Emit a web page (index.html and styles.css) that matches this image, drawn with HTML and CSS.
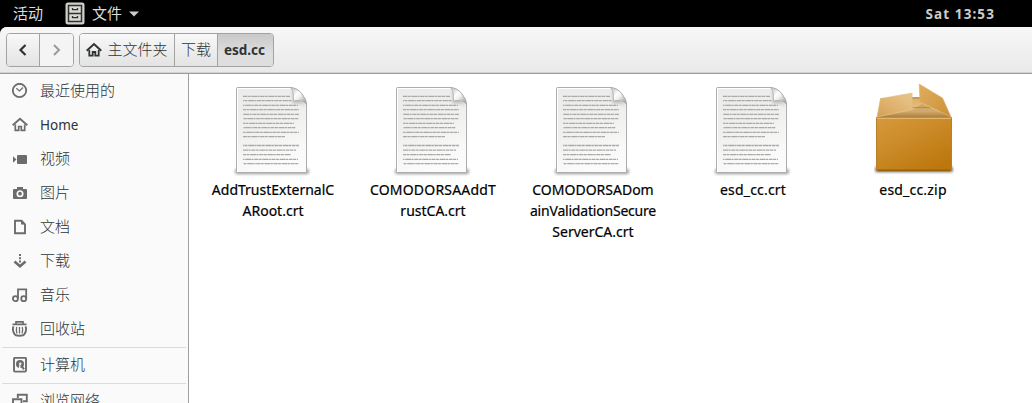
FILE: index.html
```html
<!DOCTYPE html>
<html lang="zh-CN">
<head>
<meta charset="utf-8">
<title>esd.cc</title>
<link rel="stylesheet" href="styles.css">
</head>
<body>
<svg class="defs" aria-hidden="true">
  <defs>
    <linearGradient id="paper" x1="0" y1="0" x2="0.3" y2="1">
      <stop offset="0" stop-color="#ebebe9"/><stop offset="0.5" stop-color="#efefee"/><stop offset="1" stop-color="#fbfbfb"/>
    </linearGradient>
    <linearGradient id="curl" x1="0" y1="0.3" x2="0.7" y2="1">
      <stop offset="0" stop-color="#d2d2d2"/><stop offset="0.35" stop-color="#ffffff"/><stop offset="0.6" stop-color="#eeeeee"/><stop offset="1" stop-color="#b0b0b0"/>
    </linearGradient>
    <linearGradient id="boxFront" x1="0" y1="0" x2="0.7" y2="1">
      <stop offset="0" stop-color="#d69a3c"/><stop offset="0.5" stop-color="#cb8a27"/><stop offset="1" stop-color="#bd780d"/>
    </linearGradient>
    <linearGradient id="flapLeft" x1="0" y1="1" x2="1" y2="0">
      <stop offset="0" stop-color="#d3a054"/><stop offset="0.6" stop-color="#e2b878"/><stop offset="1" stop-color="#e9c58b"/>
    </linearGradient>
    <linearGradient id="flapRight" x1="0" y1="0" x2="1" y2="1">
      <stop offset="0" stop-color="#dfae60"/><stop offset="1" stop-color="#cc9036"/>
    </linearGradient>
    <linearGradient id="boxInside" x1="0" y1="0" x2="0" y2="1">
      <stop offset="0" stop-color="#dcb06a"/><stop offset="0.7" stop-color="#e6c187"/><stop offset="1" stop-color="#b98b48"/>
    </linearGradient>
    <filter id="soft" x="-20%" y="-100%" width="140%" height="300%"><feGaussianBlur stdDeviation="1.5"/></filter>
    <symbol id="textfile" viewBox="0 0 80 96">
      <rect x="3" y="87" width="74" height="5" rx="2" fill="#000" opacity=".4" filter="url(#soft)"/>
      <path d="M4.500 6.500 Q4.500 5.500 5.500 5.500 H59 Q66 6.500 70 12 Q74.500 18 74.500 22 V89.500 Q74.500 90.500 73.500 90.500 H5.500 Q4.500 90.500 4.500 89.500Z" fill="url(#paper)" stroke="#adadad" stroke-width="1"/>
      <path d="M5.500 89.500 V6.500H58" fill="none" stroke="#fff" stroke-width="1"/>
      <g fill="none" stroke="#a9a9a7" stroke-width="1.300" stroke-dasharray="4 .5 3 .7 6 .4 2 .6">
        <path d="M11 14.300H58"/><path d="M11 18.700H60" stroke-dashoffset="3"/><path d="M11 23.300H66" stroke-dashoffset="6"/>
        <path d="M11 27.700H67" stroke-dashoffset="1"/><path d="M11 32.300H67" stroke-dashoffset="8"/><path d="M11 36.700H67" stroke-dashoffset="4"/>
        <path d="M11 41.300H62" stroke-dashoffset="2"/><path d="M11 45.700H64" stroke-dashoffset="7"/><path d="M11 50.300H67" stroke-dashoffset="5"/>
        <path d="M11 54.700H53"/><path d="M11 63.500H67" stroke-dashoffset="3"/><path d="M11 68.200H64" stroke-dashoffset="9"/>
        <path d="M11 72.700H59" stroke-dashoffset="1"/><path d="M11 77.300H66" stroke-dashoffset="6"/><path d="M11 81.700H67" stroke-dashoffset="4"/>
      </g>
      <path d="M59 8 Q62 13 60.500 21.500 Q67 19.500 74 24Z" fill="#000" opacity=".22" filter="url(#soft)"/>
      <path d="M58.500 5.500 Q62 9 61.500 19 Q69 17 74.500 22 Q74.500 18 70 12 Q66 6.500 58.500 5.500Z" fill="url(#curl)" stroke="#a8a8a8" stroke-width=".7"/>
    </symbol>
  </defs>
</svg>

<header class="topbar">
  <span class="activities">活动</span>
  <div class="appmenu">
    <svg class="cabinet" viewBox="0 0 20 23"><rect x=".5" y=".5" width="19" height="22" rx="2.500" fill="#d0d1cc"/><path d="M3.500 3.500h13v8h-13zM3.500 11.500h13v8h-13z" fill="#d8d9d4" stroke="#30302e" stroke-width="1.500"/><path d="M7.500 6v1.700h5V6M7.500 14v1.700h5V14" fill="none" stroke="#30302e" stroke-width="1.300"/></svg>
    <span>文件</span>
    <svg class="caret" viewBox="0 0 10 6"><path d="M0 .5h10L5 5.500z" fill="#ccc"/></svg>
  </div>
  <time class="clock">Sat 13:53</time>
</header>

<div class="window">
  <div class="toolbar">
    <div class="group nav">
      <button class="btn"><svg width="10" height="14" viewBox="0 0 10 14"><path d="M7.500 2 2.500 7l5 5" fill="none" stroke="#2e3436" stroke-width="2.200"/></svg></button>
      <button class="btn off"><svg width="10" height="14" viewBox="0 0 10 14"><path d="M2 2l5 5-5 5" fill="none" stroke="#999b9b" stroke-width="2"/></svg></button>
    </div>
    <div class="group path">
      <button class="btn home"><svg width="16" height="16" viewBox="0 0 16 16"><path d="M.7 8.700 8 2l7.300 6.700" fill="none" stroke="#2e3436" stroke-width="2"/><path d="M3.300 8v5.700h3.400V10h2.600v3.700h3.400V8" fill="none" stroke="#2e3436" stroke-width="1.800"/></svg><span>主文件夹</span></button>
      <button class="btn dl">下载</button>
      <button class="btn current">esd.cc</button>
    </div>
  </div>

  <div class="body">
    <nav class="sidebar">
      <a class="place"><svg viewBox="0 0 16 16"><circle cx="7.500" cy="7.500" r="6.700" fill="none" stroke="#6b6d6c" stroke-width="1.800"/><path d="M4.300 5.200 7.500 8 11 4.500" fill="none" stroke="#6b6d6c" stroke-width="1.200"/></svg><span>最近使用的</span></a>
      <a class="place latin"><svg viewBox="0 0 16 16"><path d="M.7 8.300 8 1.800l7.300 6.500" fill="none" stroke="#6b6d6c" stroke-width="1.900"/><path d="M3.300 7.500v5.800h3.400V9.500h2.600v3.800h3.400V7.500" fill="none" stroke="#6b6d6c" stroke-width="1.700"/></svg><span>Home</span></a>
      <a class="place"><svg viewBox="0 0 16 16"><rect x="5" y="4" width="10" height="9" rx="1" fill="#6b6d6c"/><path d="M1 5.200v6.600l3.500-3.300z" fill="#6b6d6c"/></svg><span>视频</span></a>
      <a class="place"><svg viewBox="0 0 16 16"><path d="M5 2h6v2h3q1 0 1 1v8q0 1-1 1H2q-1 0-1-1V5q0-1 1-1h3z" fill="#6b6d6c"/><circle cx="8" cy="8.700" r="2.700" fill="#6b6d6c" stroke="#fafafa" stroke-width="1.700"/></svg><span>图片</span></a>
      <a class="place"><svg viewBox="0 0 16 16"><path d="M3 1.800h6.500L13 5.300v9H3z" fill="none" stroke="#6b6d6c" stroke-width="1.900"/><path d="M9 1.500v4h4z" fill="#6b6d6c"/></svg><span>文档</span></a>
      <a class="place"><svg viewBox="0 0 16 16"><path d="M8 1v9" fill="none" stroke="#6b6d6c" stroke-width="2" stroke-dasharray="2 1.200"/><path d="M2.500 8.500 8 13.300l5.500-4.800" fill="none" stroke="#6b6d6c" stroke-width="2.500"/></svg><span>下载</span></a>
      <a class="place"><svg viewBox="0 0 16 16"><path d="M6 11.500V2.300h8.200v9.200" fill="none" stroke="#6b6d6c" stroke-width="1.800"/><circle cx="3.400" cy="11.700" r="2.500" fill="none" stroke="#6b6d6c" stroke-width="1.800"/><circle cx="11.700" cy="11.700" r="2.500" fill="none" stroke="#6b6d6c" stroke-width="1.800"/></svg><span>音乐</span></a>
      <a class="place"><svg viewBox="0 0 16 16"><path d="M.5 3.300h14M4 3V.8h7V3" fill="none" stroke="#6b6d6c" stroke-width="1.700"/><path d="M1.500 5.300q-1.500 3.500.8 7.500 1 2 5.200 2t5.200-2q2.300-4 .8-7.500" fill="none" stroke="#6b6d6c" stroke-width="1.900"/><path d="M4.700 6q-.8 3 .2 6.500M7.500 6v6.500M10.300 6q.8 3-.2 6.500" fill="none" stroke="#6b6d6c" stroke-width="1.300"/></svg><span>回收站</span></a>
      <a class="place sep"><svg viewBox="0 0 16 16"><rect x="2" y=".8" width="12" height="13.800" rx="1" fill="none" stroke="#6b6d6c" stroke-width="1.900"/><circle cx="8" cy="7" r="4" fill="#6b6d6c"/><circle cx="8.300" cy="6.700" r="1.200" fill="#fafafa"/><path d="M8 7.800 7.500 12" stroke="#fafafa" stroke-width="1.500"/><path d="M9 8.200 12 12.300" stroke="#6b6d6c" stroke-width="2"/></svg><span>计算机</span></a>
      <a class="place sep"><svg viewBox="0 0 16 16"><path d="M5.800 5V1.800h9v6.500H11" fill="none" stroke="#6b6d6c" stroke-width="1.900"/><path d="M1 6.200h8.500v6.500H1z" fill="none" stroke="#6b6d6c" stroke-width="1.900"/></svg><span>浏览网络</span></a>
    </nav>

    <main class="files">
      <figure class="file"><svg class="icon"><use href="#textfile"/></svg><figcaption><span>AddTrustExternalC</span><span>ARoot.crt</span></figcaption></figure>
      <figure class="file"><svg class="icon"><use href="#textfile"/></svg><figcaption><span class="wide">COMODORSAAddT</span><span>rustCA.crt</span></figcaption></figure>
      <figure class="file"><svg class="icon"><use href="#textfile"/></svg><figcaption><span>COMODORSADom</span><span class="tight">ainValidationSecure</span><span>ServerCA.crt</span></figcaption></figure>
      <figure class="file"><svg class="icon"><use href="#textfile"/></svg><figcaption><span class="wide">esd_cc.crt</span></figcaption></figure>
      <figure class="file">
        <svg class="icon zip" viewBox="0 0 80 96">
          <rect x="1" y="85" width="78" height="5" rx="2" fill="#000" opacity=".6" filter="url(#soft)"/>
          <path d="M6.500 16 H68.500 L77 35 H3Z" fill="url(#boxInside)"/>
          <path d="M38 15H46V17H38Z" fill="#c99a50"/>
          <path d="M38 25.500H56" stroke="#c28f43" stroke-width=".8"/>
          <path d="M38 28 5 35H76L48 22Z" fill="#8a5a18" opacity=".22"/>
          <path d="M2.500 35.500H77.500V87Q77.500 89 75.500 89H4.500Q2.500 89 2.500 87Z" fill="url(#boxFront)" stroke="#b9802c"/>
          <path d="M3 36.300H77" stroke="#e3b56c" stroke-width="1.200"/>
          <path d="M3.500 88.300H76.500" stroke="#96600d" stroke-width="1.500"/>
          <path d="M6.500 16.500 38.200 11 37.700 27.500 3 35Z" fill="url(#flapLeft)" stroke="#e3c28b" stroke-width=".6"/>
          <path d="M45.200 2 68.500 16 77 35 46 19.500Z" fill="url(#flapRight)" stroke="#dcae65" stroke-width=".6"/>
        </svg>
        <figcaption><span class="wide">esd_cc.zip</span></figcaption>
      </figure>
    </main>
  </div>
</div>
</body>
</html>
```
FILE: styles.css
```css
* { box-sizing: border-box; }
body {
  margin: 0;
  width: 1032px;
  height: 403px;
  overflow: hidden;
  background: #000;
  font-family: "Noto Sans", "Noto Sans CJK SC", sans-serif;
  font-size: 15px;
  color: #2e3436;
  display: flex;
  flex-direction: column;
}
.defs { width: 0; height: 0; flex: none; display: block; }
svg { flex: none; display: block; }

.topbar {
  height: 27px;
  flex: none;
  display: flex;
  align-items: center;
  padding: 0 37px 0 13px;
  color: #dcdcdc;
  line-height: 26px;
}
.topbar span { font-family: "Noto Sans CJK SC", sans-serif; padding-bottom: 2px; }
.activities { width: 52px; }
.appmenu { display: flex; align-items: center; }
.appmenu span { width: 31px; }
.cabinet { width: 20px; height: 23px; margin-right: 7px; }
.caret { width: 10px; height: 6px; margin-left: 6px; }
.clock { margin-left: auto; font-size: 13.5px; font-weight: 700; letter-spacing: 1.1px; color: #ccc; }

.window {
  flex: 1;
  min-height: 0;
  display: flex;
  flex-direction: column;
  background: #fff;
  border-radius: 7px 0 0 0;
  overflow: hidden;
}
.toolbar {
  height: 47px;
  flex: none;
  display: flex;
  align-items: flex-start;
  gap: 5px;
  padding: 6px;
  background: linear-gradient(#f7f7f7, #e9e9e9);
  border-bottom: 1px solid #9c9c9c;
  box-shadow: inset 0 -1px #d2d2d2;
}
.group { display: flex; height: 34px; border: 1px solid #a3a3a3; border-radius: 4px; overflow: hidden; }
.btn {
  border: 0;
  border-left: 1px solid #a3a3a3;
  margin: 0;
  padding: 0 0 3px;
  display: flex;
  align-items: center;
  justify-content: center;
  background: linear-gradient(#f8f8f8, #e3e3e3);
  color: #2e3436;
  font-family: "Noto Sans CJK SC", sans-serif;
  font-size: 15px;
  font-weight: 300;
  line-height: 30px;
}
.btn:first-child { border-left: 0; }
.nav .btn { width: 32px; padding: 0; }
.nav .btn.off { width: 34px; background: #f4f4f4; }
.home { width: 94px; gap: 5px; }
.home svg { margin-top: 3px; }
.dl { width: 43px; }
.current {
  width: 56px;
  background: linear-gradient(#c9c9c9, #dedede 60%);
  font-family: "Noto Sans", sans-serif;
  font-size: 13.5px;
  font-weight: 700;
  padding: 0 2px 0 0;
}

.body { flex: 1; min-height: 0; display: flex; }
.sidebar { width: 189px; flex: none; background: #fafafa; border-right: 1px solid #9f9f9f; overflow: hidden; }
.place {
  height: 34px;
  display: flex;
  align-items: center;
  gap: 12px;
  padding-left: 12px;
  font-family: "Noto Sans CJK SC", sans-serif;
  font-weight: 300;
  line-height: 32px;
}
.place svg { width: 16px; height: 16px; }
.place span { padding-bottom: 2px; }
.place.latin span { font-family: "Noto Sans", sans-serif; font-weight: 400; font-size: 13.5px; padding: 0; }
.place.sep { height: 36px; border-top: 1px solid #dcdcdc; margin: 0 2px; padding: 0 0 2px 10px; }
.sidebar .place:nth-child(9) { margin-top: 1px; }

.files { display: flex; align-items: flex-start; padding-left: 4px; }
.file { margin: 0; width: 160px; padding-top: 8px; display: flex; flex-direction: column; align-items: center; }
.icon { width: 80px; height: 96px; margin-right: 3px; }
.icon.zip { margin-right: 0; margin-left: 1px; }
figcaption {
  display: flex;
  flex-direction: column;
  align-items: center;
  margin-top: 1px;
  font-size: 14px;
  line-height: 21px;
  color: #000;
  white-space: nowrap;
  -webkit-text-stroke: .2px #000;
}
figcaption .wide { letter-spacing: .2px; }
figcaption .tight { letter-spacing: -.2px; }
```
